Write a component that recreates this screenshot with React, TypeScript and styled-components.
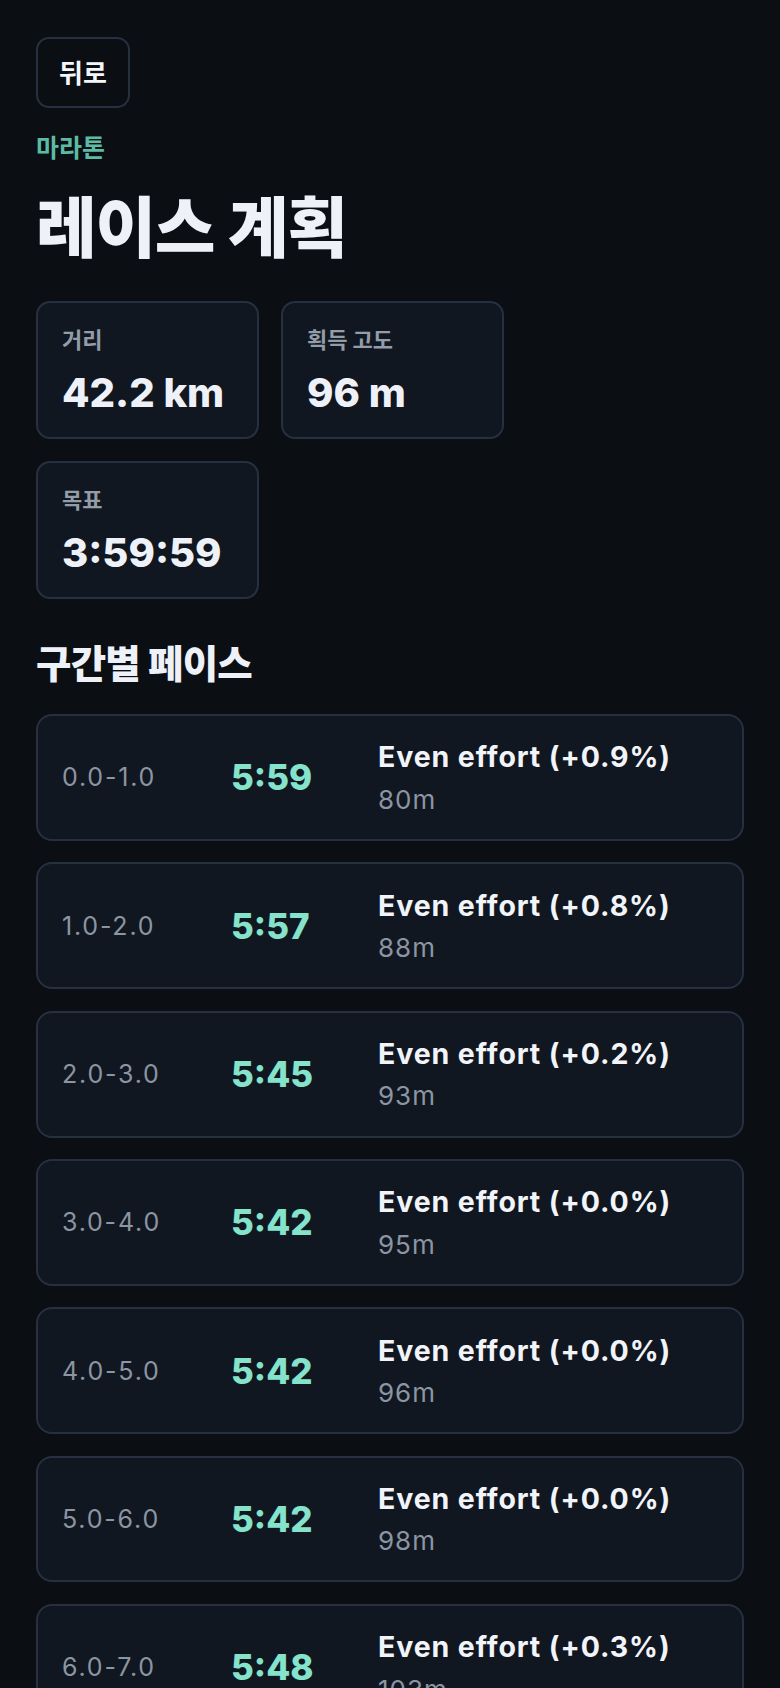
import React from 'react';
import styled, { createGlobalStyle } from 'styled-components';

const GlobalStyle = createGlobalStyle`
  html, body {
    margin: 0;
    padding: 0;
    background: #0b0e13;
  }
  body {
    font-family: Inter, "Noto Sans CJK KR", sans-serif;
    color: #eef2f8;
  }
`;

interface Split {
  range: string;
  pace: string;
  effort: string;
  elevation: string;
}

const splits: Split[] = [
  { range: '0.0-1.0', pace: '5:59', effort: '+0.9%', elevation: '80m' },
  { range: '1.0-2.0', pace: '5:57', effort: '+0.8%', elevation: '88m' },
  { range: '2.0-3.0', pace: '5:45', effort: '+0.2%', elevation: '93m' },
  { range: '3.0-4.0', pace: '5:42', effort: '+0.0%', elevation: '95m' },
  { range: '4.0-5.0', pace: '5:42', effort: '+0.0%', elevation: '96m' },
  { range: '5.0-6.0', pace: '5:42', effort: '+0.0%', elevation: '98m' },
  { range: '6.0-7.0', pace: '5:48', effort: '+0.3%', elevation: '103m' },
  { range: '7.0-8.0', pace: '5:50', effort: '+0.4%', elevation: '106m' },
  { range: '8.0-9.0', pace: '5:44', effort: '+0.1%', elevation: '101m' },
];

const stats = [
  { label: '거리', value: '42.2 km' },
  { label: '획득 고도', value: '96 m' },
  { label: '목표', value: '3:59:59' },
];

export default () => (
  <>
    <GlobalStyle />
    <Page>
      <BackButton type="button">뒤로</BackButton>
      <Eyebrow>마라톤</Eyebrow>
      <Title>레이스 계획</Title>
      <StatGrid>
        {stats.map((s) => (
          <StatCard key={s.label}>
            <StatLabel>{s.label}</StatLabel>
            <StatValue>{s.value}</StatValue>
          </StatCard>
        ))}
      </StatGrid>
      <SectionTitle>구간별 페이스</SectionTitle>
      <SplitList>
        {splits.map((s) => (
          <SplitRow key={s.range}>
            <Range>{s.range}</Range>
            <Pace>{s.pace}</Pace>
            <div>
              <Effort>Even effort ({s.effort})</Effort>
              <Elevation>{s.elevation}</Elevation>
            </div>
          </SplitRow>
        ))}
      </SplitList>
    </Page>
  </>
);

const Page = styled.main`
  display: flex;
  flex-direction: column;
  align-items: flex-start;
  padding: 37px 36px 40px;
`;

const BackButton = styled.button`
  height: 71px;
  padding: 0 21px;
  background: transparent;
  border: 2px solid #263040;
  border-radius: 13px;
  color: #f3f6fa;
  font-family: "Noto Sans CJK KR", sans-serif;
  font-weight: 700;
  font-size: 26px;
  line-height: 1.4;
`;

const Eyebrow = styled.div`
  margin-top: 21px;
  color: #5cbba3;
  font-family: "Noto Sans CJK KR", sans-serif;
  font-weight: 700;
  font-size: 25px;
  line-height: 1.4;
`;

const Title = styled.h1`
  margin: 20px 0 0;
  font-family: "Noto Sans CJK KR", sans-serif;
  font-weight: 900;
  font-size: 66px;
  line-height: 1.2;
  letter-spacing: -0.02em;
  color: #eef2f8;
`;

const StatGrid = styled.div`
  display: grid;
  grid-template-columns: 223px 223px;
  gap: 22px;
  margin-top: 38px;
`;

const StatCard = styled.div`
  display: flex;
  flex-direction: column;
  box-sizing: border-box;
  height: 138px;
  padding: 20px 24px;
  background: #111720;
  border: 2px solid #263040;
  border-radius: 14px;
`;

const StatLabel = styled.div`
  font-family: "Noto Sans CJK KR", sans-serif;
  font-weight: 600;
  font-size: 22px;
  line-height: 1.4;
  color: #939daa;
`;

const StatValue = styled.div`
  margin-top: 15px;
  font-family: Inter, sans-serif;
  font-weight: 800;
  font-size: 40px;
  line-height: 1.2;
  color: #eef2f8;
`;

const SectionTitle = styled.h2`
  margin: 36px 0 0;
  font-family: "Noto Sans CJK KR", sans-serif;
  font-weight: 900;
  font-size: 38.5px;
  line-height: 1.4;
  letter-spacing: -0.02em;
  color: #eef2f8;
`;

const SplitList = styled.div`
  display: flex;
  flex-direction: column;
  gap: 21.5px;
  align-self: stretch;
  margin-top: 25px;
`;

const SplitRow = styled.div`
  display: grid;
  grid-template-columns: 145px 123px 1fr;
  column-gap: 24px;
  align-items: center;
  padding: 20.25px 24px;
  background: #111720;
  border: 2px solid #263040;
  border-radius: 16px;
`;

const Range = styled.div`
  font-size: 25px;
  letter-spacing: 1.8px;
  color: #8b95a3;
`;

const Pace = styled.div`
  font-size: 35px;
  font-weight: 800;
  color: #85e2cb;
`;

const Effort = styled.div`
  font-size: 28.5px;
  font-weight: 700;
  letter-spacing: 0.9px;
  line-height: 1.45;
  color: #f1f4f9;
`;

const Elevation = styled.div`
  margin-top: 2px;
  font-size: 26px;
  letter-spacing: 1px;
  line-height: 1.5;
  color: #8b95a3;
`;
